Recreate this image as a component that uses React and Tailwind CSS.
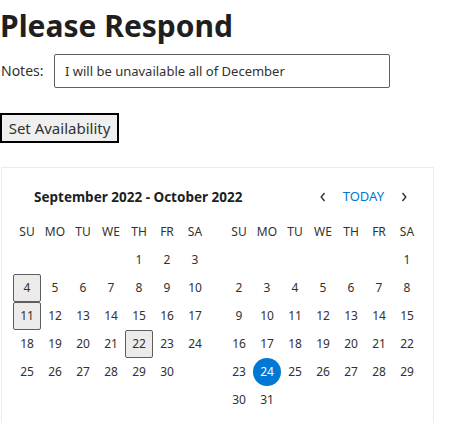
import { useState } from 'react'

const weekDays = ['SU', 'MO', 'TU', 'WE', 'TH', 'FR', 'SA']

// leading blanks + number of days
const months = [
  { id: 'sep', offset: 4, days: 30, selected: [4, 11, 22], today: null },
  { id: 'oct', offset: 6, days: 31, selected: [], today: 24 },
]

function ChevronLeft() {
  return (
    <svg width="8" height="10" viewBox="0 0 8 10" fill="none">
      <path d="M5.5 1 L2.2 5 L5.5 9" stroke="#323130" strokeWidth="1.4" />
    </svg>
  )
}

function ChevronRight() {
  return (
    <svg width="8" height="10" viewBox="0 0 8 10" fill="none">
      <path d="M2.5 1 L5.8 5 L2.5 9" stroke="#323130" strokeWidth="1.4" />
    </svg>
  )
}

function MonthGrid({ month }) {
  const cells = [
    ...Array.from({ length: month.offset }, () => null),
    ...Array.from({ length: month.days }, (_, idx) => idx + 1),
  ]
  return (
    <div className="grid w-[196px] grid-cols-7">
      {weekDays.map((day) => (
        <span key={day} className="flex h-[28px] items-center justify-center text-[12px]">
          {day}
        </span>
      ))}
      {cells.map((day, idx) => {
        if (!day) return <span key={`b${idx}`} className="h-[28px]" />
        const isSelected = month.selected.includes(day)
        const isToday = month.today === day
        return (
          <span
            key={day}
            className={`flex h-[28px] w-[28px] items-center justify-center text-[12px] ${
              isToday
                ? 'rounded-full bg-[#0078d4] text-white'
                : isSelected
                ? 'rounded-[2px] border border-[#605e5c] bg-[#edebe9]'
                : ''
            }`}
          >
            {day}
          </span>
        )
      })}
    </div>
  )
}

function App() {
  const [notes, setNotes] = useState('I will be unavailable all of December')

  return (
    <div className="font-['Noto_Sans',sans-serif] text-[#323130]">
      <h1 className="h-[48px] text-[30px] leading-[52px] font-bold text-[#201f1e]">Please Respond</h1>

      <div className="mt-[6px] flex items-center">
        <label className="w-[46px] pl-[1px] text-[14px] leading-[20px]">Notes:</label>
        <input
          value={notes}
          onChange={(e) => setNotes(e.target.value)}
          className="ml-[8px] h-[34px] w-[336px] rounded-[2px] border border-[#605e5c] px-[10px] text-[13px] text-[#323130] outline-none"
        />
      </div>

      <button className="mt-[25px] h-[30px] w-[119px] border-2 border-black bg-[#efefef] text-[15px] leading-[20px]">
        Set Availability
      </button>

      <div className="mt-[24px] ml-[1px] w-[433px] border border-[#edebe9] px-[11px] pt-[15px] pb-[12px]">
        <div className="flex gap-[16px]">
          <div className="flex h-[28px] w-[196px] items-center pl-[21px] text-[13.5px] font-bold whitespace-nowrap text-[#201f1e]">
            September 2022 - October 2022
          </div>
          <div className="flex h-[28px] w-[196px] items-center justify-end pr-[3px]">
            <button className="flex h-[28px] w-[28px] items-center justify-center">
              <ChevronLeft />
            </button>
            <button className="h-[28px] px-[6px] text-[13px] text-[#0078d4]">TODAY</button>
            <button className="flex h-[28px] w-[28px] items-center justify-center">
              <ChevronRight />
            </button>
          </div>
        </div>
        <div className="mt-[7px] flex items-start gap-[16px]">
          {months.map((month) => (
            <MonthGrid key={month.id} month={month} />
          ))}
        </div>
      </div>
    </div>
  )
}

export default App
